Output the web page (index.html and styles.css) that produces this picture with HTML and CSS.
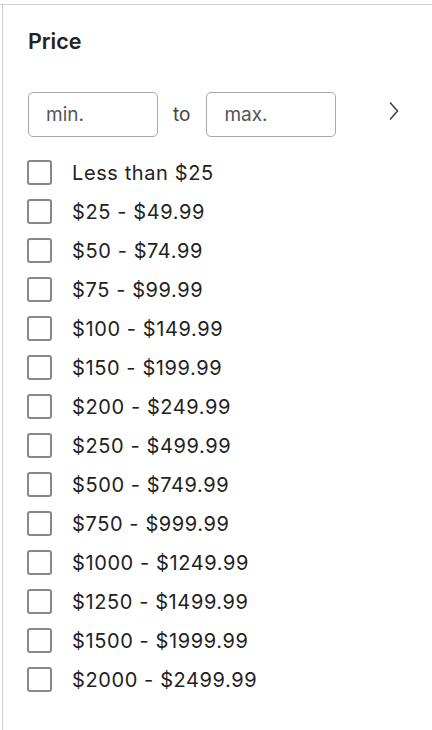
FILE: index.html
```html
<!DOCTYPE html>
<html>
<head>
<meta charset="utf-8">
<link rel="stylesheet" href="styles.css">
</head>
<body>
<div class="topline"></div>
<div class="panel">
  <h2 class="title">Price</h2>
  <div class="range">
    <div class="box">min.</div>
    <span class="to">to</span>
    <div class="box">max.</div>
    <svg class="chev" width="12" height="20" viewBox="0 0 12 20"><path d="M2 1.5 L9.5 10 L2 18.5" fill="none" stroke="#444" stroke-width="1.6"/></svg>
  </div>
  <ul class="list">
    <li><span class="cb"></span>Less than $25</li>
    <li><span class="cb"></span>$25 - $49.99</li>
    <li><span class="cb"></span>$50 - $74.99</li>
    <li><span class="cb"></span>$75 - $99.99</li>
    <li><span class="cb"></span>$100 - $149.99</li>
    <li><span class="cb"></span>$150 - $199.99</li>
    <li><span class="cb"></span>$200 - $249.99</li>
    <li><span class="cb"></span>$250 - $499.99</li>
    <li><span class="cb"></span>$500 - $749.99</li>
    <li><span class="cb"></span>$750 - $999.99</li>
    <li><span class="cb"></span>$1000 - $1249.99</li>
    <li><span class="cb"></span>$1250 - $1499.99</li>
    <li><span class="cb"></span>$1500 - $1999.99</li>
    <li><span class="cb"></span>$2000 - $2499.99</li>
  </ul>
</div>
</body>
</html>
```

FILE: styles.css
```css
html, body {
  margin: 0;
  padding: 0;
  background: #fff;
  font-family: Inter, "Noto Sans", sans-serif;
  color: #222;
}
body {
  padding-top: 4px;
  height: 730px;
  box-sizing: border-box;
  overflow: hidden;
}
.topline {
  height: 1px;
  background: #d0d0d0;
}
.panel {
  margin-left: 2px;
  border-left: 1px solid #d0d0d0;
  height: 725px;
  box-sizing: border-box;
  padding-left: 25px;
  padding-top: 23px;
}
.title {
  margin: 0;
  font-size: 21.5px;
  font-weight: 600;
  line-height: 26px;
  color: #222;
}
.range {
  display: flex;
  align-items: center;
  margin-top: 38px;
}
.box {
  width: 128px;
  height: 43px;
  border: 1px solid #a8a8a8;
  border-radius: 5px;
  box-sizing: content-box;
  display: flex;
  align-items: center;
  font-size: 19px;
  color: #555;
  text-indent: 17px;
}
.to {
  font-size: 19px;
  color: #444;
  margin: 0 16px 0 15px;
}
.chev {
  margin-left: 52px;
  margin-top: -8px;
}
.list {
  list-style: none;
  margin: 16px 0 0 0;
  padding: 0;
}
.list li {
  display: flex;
  align-items: center;
  height: 39px;
  font-size: 20px;
  letter-spacing: 0.6px;
  color: #222;
}
.cb {
  width: 21px;
  height: 21px;
  border: 2.5px solid #888;
  border-radius: 3px;
  margin-left: -1px;
  margin-right: 20px;
  flex: none;
}
```
